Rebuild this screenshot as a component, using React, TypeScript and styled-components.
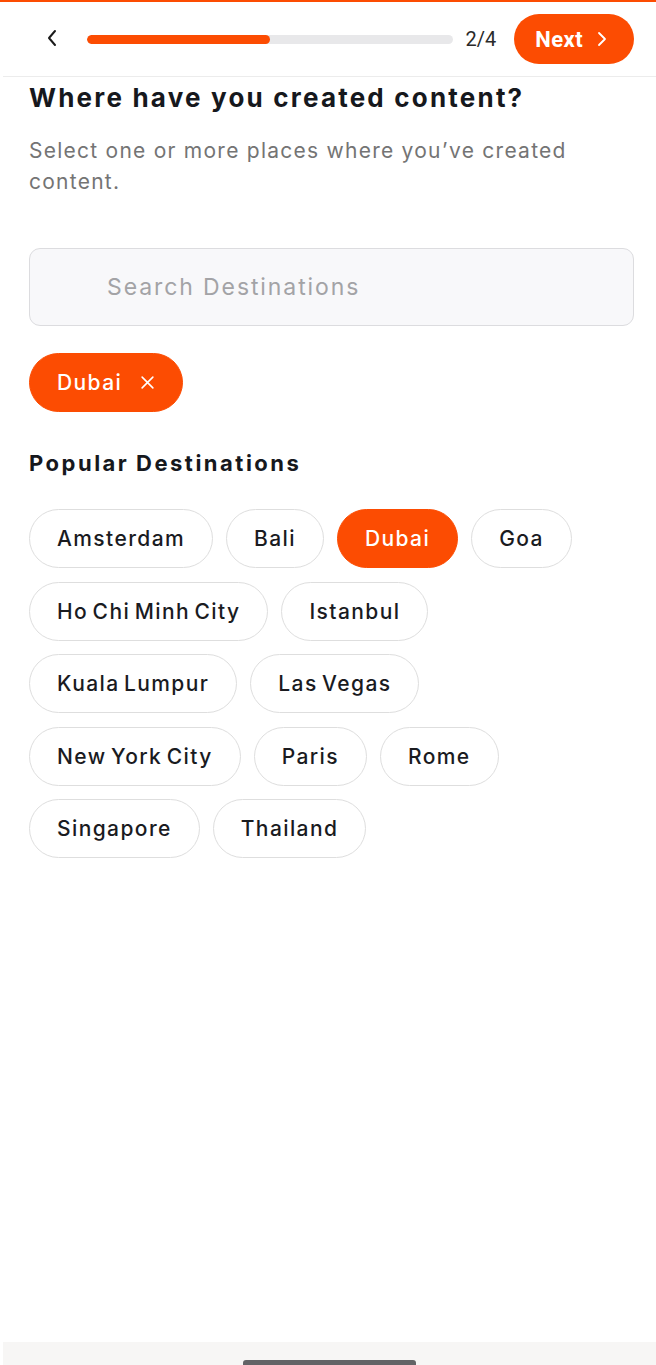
import React, { useState } from 'react';
import styled, { createGlobalStyle } from 'styled-components';

const ORANGE = '#fc4c02';

const GlobalStyle = createGlobalStyle`
  html, body {
    margin: 0;
    padding: 0;
    background: #ffffff;
  }
  body {
    font-family: Inter, 'Noto Sans', sans-serif;
    color: #16181d;
  }
  * {
    box-sizing: border-box;
  }
`;

const popular = [
  'Amsterdam',
  'Bali',
  'Dubai',
  'Goa',
  'Ho Chi Minh City',
  'Istanbul',
  'Kuala Lumpur',
  'Las Vegas',
  'New York City',
  'Paris',
  'Rome',
  'Singapore',
  'Thailand',
];

export default function App() {
  const [selected, setSelected] = useState<string[]>(['Dubai']);
  const step = 2;
  const total = 4;

  const toggle = (name: string) =>
    setSelected((prev) =>
      prev.includes(name) ? prev.filter((n) => n !== name) : [...prev, name]
    );

  return (
    <>
      <GlobalStyle />
      <StyledScreen>
        <StyledHeader>
          <StyledBack aria-label="Back">
            <svg width="14" height="20" viewBox="0 0 14 20" fill="none">
              <path
                d="M10 3 L4 10 L10 17"
                stroke="#1b1b1b"
                strokeWidth="2"
                strokeLinecap="round"
                strokeLinejoin="round"
              />
            </svg>
          </StyledBack>
          <StyledTrack>
            <StyledFill style={{ width: `${(step / total) * 100}%` }} />
          </StyledTrack>
          <StyledStep>
            {step}/{total}
          </StyledStep>
          <StyledNext>
            Next
            <svg width="12" height="18" viewBox="0 0 12 18" fill="none">
              <path
                d="M3 3 L9 9 L3 15"
                stroke="#ffffff"
                strokeWidth="1.8"
                strokeLinecap="round"
                strokeLinejoin="round"
              />
            </svg>
          </StyledNext>
        </StyledHeader>

        <StyledContent>
          <StyledTitle>Where have you created content?</StyledTitle>
          <StyledSubtitle>
            Select one or more places where you’ve created content.
          </StyledSubtitle>

          <StyledSearch placeholder="Search Destinations" />

          <StyledSelectedRow>
            {selected.map((name) => (
              <StyledChip key={name} active onClick={() => toggle(name)}>
                {name}
                <svg width="15" height="15" viewBox="0 0 14 14" fill="none">
                  <path
                    d="M2 2 L12 12 M12 2 L2 12"
                    stroke="#ffffff"
                    strokeWidth="1.5"
                    strokeLinecap="round"
                  />
                </svg>
              </StyledChip>
            ))}
          </StyledSelectedRow>

          <StyledSectionTitle>Popular Destinations</StyledSectionTitle>
          <StyledChipGrid>
            {popular.map((name) => (
              <StyledChip
                key={name}
                active={selected.includes(name)}
                onClick={() => toggle(name)}
              >
                {name}
              </StyledChip>
            ))}
          </StyledChipGrid>
        </StyledContent>

        <StyledNavBar>
          <StyledHomeIndicator />
        </StyledNavBar>
      </StyledScreen>
    </>
  );
}

const StyledScreen = styled.div`
  display: flex;
  flex-direction: column;
  min-height: 1365px;
  border-top: 2px solid ${ORANGE};
`;

const StyledHeader = styled.div`
  display: flex;
  align-items: center;
  height: 75px;
  padding: 0 22px 0 36px;
  margin-left: 3px;
  border-bottom: 1px solid #ececec;
`;

const StyledBack = styled.button`
  display: flex;
  align-items: center;
  justify-content: center;
  width: 26px;
  height: 30px;
  padding: 0;
  margin-top: -2px;
  border: none;
  background: none;
`;

const StyledTrack = styled.div`
  flex: 1;
  height: 9px;
  margin: 0 13px 0 22px;
  border-radius: 5px;
  background: #e8e8ea;
  overflow: hidden;
`;

const StyledFill = styled.div`
  height: 100%;
  border-radius: 5px;
  background: ${ORANGE};
`;

const StyledStep = styled.span`
  font-family: Roboto, sans-serif;
  font-size: 20px;
  color: #2a2a2a;
  margin-right: 18px;
`;

const StyledNext = styled.button`
  display: flex;
  align-items: center;
  gap: 13px;
  height: 50px;
  padding: 0 26px 0 21px;
  border: none;
  border-radius: 25px;
  background: ${ORANGE};
  color: #ffffff;
  font-family: Roboto, sans-serif;
  font-weight: 700;
  font-size: 22px;
  letter-spacing: 0.4px;
`;

const StyledContent = styled.div`
  flex: 1;
  display: flex;
  flex-direction: column;
  align-items: flex-start;
  padding: 4px 22px 0 29px;
`;

const StyledTitle = styled.h1`
  margin: 0;
  font-size: 26px;
  line-height: 34px;
  font-weight: 700;
  letter-spacing: 2.2px;
  color: #16181d;
`;

const StyledSubtitle = styled.p`
  margin: 20px 0 0;
  font-size: 21px;
  line-height: 31px;
  font-weight: 400;
  letter-spacing: 1.25px;
  color: #747474;
  max-width: 580px;
`;

const StyledSearch = styled.input`
  width: 100%;
  height: 78px;
  margin-top: 51px;
  padding: 0 0 0 77px;
  border: 1px solid #dcdcdf;
  border-radius: 11px;
  background: #f8f8fa;
  font-family: inherit;
  font-size: 23px;
  letter-spacing: 1.9px;
  color: #222;
  outline: none;

  &::placeholder {
    color: #a3a3a6;
  }
`;

const StyledSelectedRow = styled.div`
  display: flex;
  flex-wrap: wrap;
  gap: 13px;
  margin-top: 27px;
`;

const StyledSectionTitle = styled.h2`
  margin: 36px 0 0;
  font-size: 22px;
  line-height: 30px;
  font-weight: 700;
  letter-spacing: 2.5px;
  word-spacing: -1px;
  color: #16181d;
`;

const StyledChipGrid = styled.div`
  display: flex;
  flex-wrap: wrap;
  gap: 13.5px 13px;
  margin-top: 31px;
  max-width: 600px;
`;

const StyledChip = styled.button<{ active?: boolean }>`
  display: flex;
  align-items: center;
  gap: 18px;
  height: 59px;
  padding: 0 27px;
  border-radius: 30px;
  border: 1px solid ${({ active }) => (active ? ORANGE : '#dedede')};
  background: ${({ active }) => (active ? ORANGE : '#ffffff')};
  color: ${({ active }) => (active ? '#ffffff' : '#1a1b1f')};
  font-family: inherit;
  font-size: 21px;
  font-weight: 500;
  letter-spacing: 1.4px;
  word-spacing: -2.5px;
  cursor: pointer;
`;

const StyledNavBar = styled.div`
  display: flex;
  justify-content: center;
  align-items: flex-end;
  height: 23px;
  margin-left: 3px;
  background: #f7f6f5;
`;

const StyledHomeIndicator = styled.div`
  width: 173px;
  height: 5px;
  border-radius: 3px 3px 0 0;
  background: #636366;
`;
